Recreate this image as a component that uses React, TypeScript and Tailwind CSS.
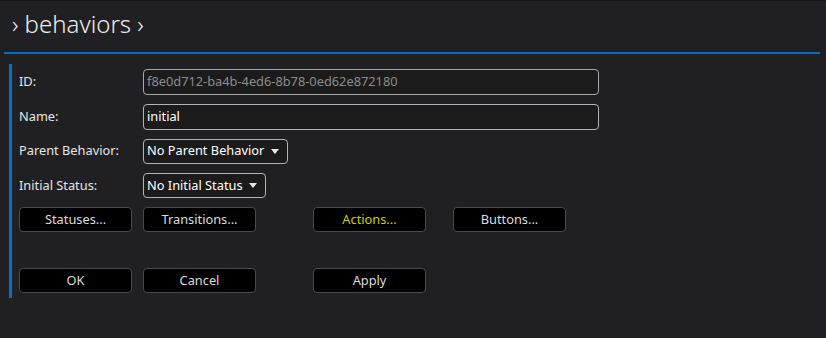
import React from "react";

const font = { fontFamily: '"Noto Sans", "Open Sans", sans-serif' };

function Btn({ label, className = "", textClass = "text-[#dcdcdc]" }: { label: string; className?: string; textClass?: string }) {
  return (
    <div
      className={`flex h-[25px] w-[113px] items-center justify-center rounded-[4px] border border-[#4a4a4a] bg-black text-[12.8px] ${textClass} ${className}`}
    >
      {label}
    </div>
  );
}

function Select({ label, w }: { label: string; w: string }) {
  return (
    <div className={`flex h-[25px] ${w} items-center justify-between rounded-[4px] border border-[#b4b4b4] bg-[#1b1b1b] pl-[3px] pr-[8px] text-[12.8px] text-white`}>
      <span>{label}</span>
      <svg width="8" height="5" viewBox="0 0 8 5"><path d="M0 0H8L4 5Z" fill="#e8e8e8" /></svg>
    </div>
  );
}

export default function App() {
  return (
    <div className="h-[338px] w-[826px] overflow-hidden bg-[#202022] text-white" style={font}>
      <div className="h-[1px] bg-[#141416]" />
      <div className="flex h-[51px] items-start pl-[12px] pt-[5px] text-[24px] font-light leading-[36px] text-[#ececec]">
        › behaviors ›
      </div>
      <div className="ml-[4px] mr-[6px] h-[2px] bg-[#0b6cbf]" />
      <div className="ml-[9px] mt-[10px] flex h-[234px] flex-col border-l-[3px] border-[#0b6fc4] pl-[7px]">
        <div className="mt-[5px] flex h-[26px] items-center">
          <div className="w-[124px] text-[12.8px] text-[#e6e6e6]">ID:</div>
          <div className="flex h-[26px] w-[456px] items-center rounded-[4px] border border-[#a8a8a8] bg-[#1b1b1b] pl-[3px] text-[12.8px] text-[#8c8c8c]">
            f8e0d712-ba4b-4ed6-8b78-0ed62e872180
          </div>
        </div>
        <div className="mt-[9px] flex h-[26px] items-center">
          <div className="w-[124px] text-[12.8px] text-[#e6e6e6]">Name:</div>
          <div className="flex h-[26px] w-[456px] items-center rounded-[4px] border border-[#b4b4b4] bg-[#1b1b1b] pl-[3px] text-[12.8px] text-white">
            initial
          </div>
        </div>
        <div className="mt-[8px] flex h-[26px] items-center">
          <div className="w-[124px] text-[12.8px] text-[#e6e6e6]">Parent Behavior:</div>
          <Select label="No Parent Behavior" w="w-[145px]" />
        </div>
        <div className="mt-[9px] flex h-[25px] items-center">
          <div className="w-[124px] text-[12.8px] text-[#e6e6e6]">Initial Status:</div>
          <Select label="No Initial Status" w="w-[123px]" />
        </div>
        <div className="mt-[9px] flex">
          <Btn label="Statuses..." />
          <Btn label="Transitions..." className="ml-[11px]" />
          <Btn label="Actions..." className="ml-[57px]" textClass="text-[#cccc00]" />
          <Btn label="Buttons..." className="ml-[27px]" />
        </div>
        <div className="mt-[36px] flex">
          <Btn label="OK" />
          <Btn label="Cancel" className="ml-[11px]" />
          <Btn label="Apply" className="ml-[57px]" />
        </div>
      </div>
    </div>
  );
}
